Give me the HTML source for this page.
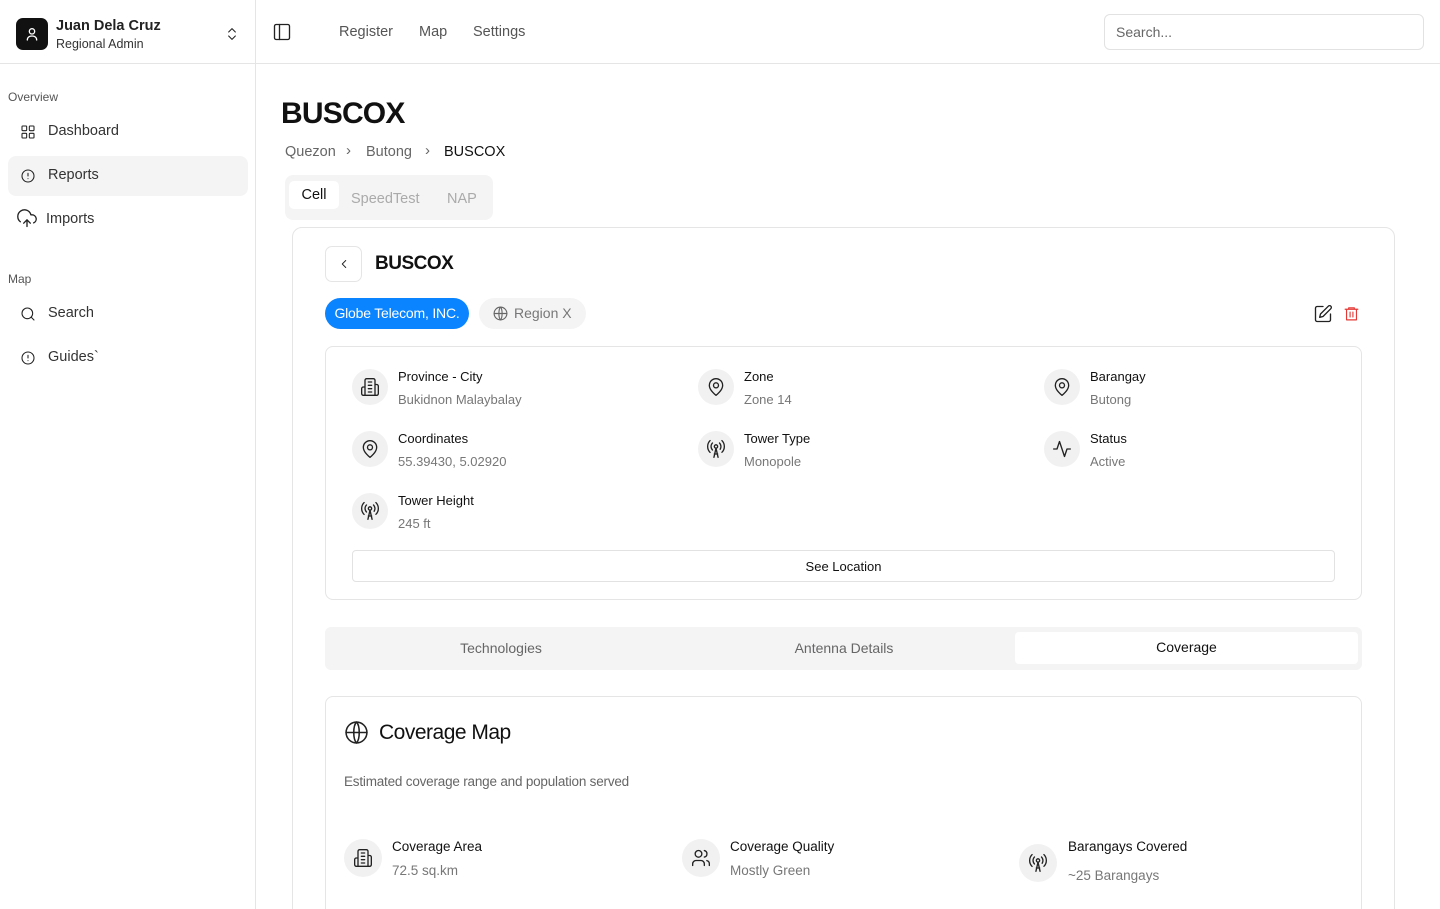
<!DOCTYPE html>
<html style="width:1440px;height:909px;overflow:hidden"><head><meta charset="utf-8"><style>
*{box-sizing:border-box;margin:0;padding:0}
body{width:1440px;height:909px;overflow:hidden;background:#fff;font-family:"Liberation Sans",sans-serif;color:#111;position:relative}
#w{position:absolute;left:0;top:0;width:1440px;height:909px;overflow:hidden}
.a{position:absolute}
svg{display:block}
.ic{fill:none;stroke:#222;stroke-width:1.6;stroke-linecap:round;stroke-linejoin:round}
.nav{font-size:14.5px;color:#333}
.circ{position:absolute;width:36px;height:36px;border-radius:50%;background:#f1f1f1;display:flex;align-items:center;justify-content:center}
.lbl{position:absolute;font-size:13px;color:#111}
.val{position:absolute;font-size:13px;color:#777}
</style></head><body><div id="w">
<div class="a" style="left:255px;top:0;width:1px;height:909px;background:#e5e5e5"></div>
<div class="a" style="left:0;top:63px;width:1440px;height:1px;background:#e5e5e5"></div>
<div class="a" style="left:16px;top:18px;width:32px;height:32px;border-radius:7px;background:#111;display:flex;align-items:center;justify-content:center">
<svg width="16" height="16" viewBox="0 0 24 24" fill="none" stroke="#fff" stroke-width="2" stroke-linecap="round"><circle cx="12" cy="8" r="4"/><path d="M5 21c0-4 3-6 7-6s7 2 7 6"/></svg></div>
<div class="a" style="left:56px;top:18px;font-size:14.5px;font-weight:bold;color:#222">Juan Dela Cruz</div>
<div class="a" style="left:56px;top:37px;font-size:12.5px;color:#333">Regional Admin</div>
<svg class="a ic" style="left:224px;top:26px" width="16" height="16" viewBox="0 0 24 24"><path d="M7 9l5-5 5 5M7 15l5 5 5-5"/></svg>
<div class="a" style="left:8px;top:90px;font-size:12px;color:#555">Overview</div>
<div class="a" style="left:8px;top:156px;width:240px;height:40px;border-radius:8px;background:#f4f4f5"></div>
<svg class="a ic" style="left:20px;top:124px" width="16" height="16" viewBox="0 0 24 24"><rect x="3" y="3" width="7" height="7" rx="1"/><rect x="14" y="3" width="7" height="7" rx="1"/><rect x="3" y="14" width="7" height="7" rx="1"/><rect x="14" y="14" width="7" height="7" rx="1"/></svg>
<div class="a nav" style="left:48px;top:123px">Dashboard</div>
<svg class="a ic" style="left:20px;top:168px" width="16" height="16" viewBox="0 0 24 24"><circle cx="12" cy="12" r="9"/><path d="M12 8v4M12 16h.01"/></svg>
<div class="a nav" style="left:48px;top:167px">Reports</div>
<svg class="a ic" style="left:16px;top:209px" width="22" height="20" viewBox="0 0 24 24"><path d="M12 13v8M8 17l4-4 4 4M20 16.6A5 5 0 0 0 18 7h-1.3A8 8 0 1 0 4 15.3"/></svg>
<div class="a nav" style="left:46px;top:211px">Imports</div>
<div class="a" style="left:8px;top:272px;font-size:12px;color:#555">Map</div>
<svg class="a ic" style="left:20px;top:306px" width="16" height="16" viewBox="0 0 24 24"><circle cx="11" cy="11" r="8"/><path d="M21 21l-4.3-4.3"/></svg>
<div class="a nav" style="left:48px;top:305px">Search</div>
<svg class="a ic" style="left:20px;top:350px" width="16" height="16" viewBox="0 0 24 24"><circle cx="12" cy="12" r="9"/><path d="M12 8v4M12 16h.01"/></svg>
<div class="a nav" style="left:48px;top:349px">Guides`</div>
<svg class="a ic" style="left:272px;top:22px" width="20" height="20" viewBox="0 0 24 24"><rect x="3" y="3" width="18" height="18" rx="2"/><path d="M9 3v18"/></svg>
<div class="a" style="left:339px;top:24px;font-size:14.5px;color:#555">Register</div>
<div class="a" style="left:419px;top:24px;font-size:14.5px;color:#555">Map</div>
<div class="a" style="left:473px;top:24px;font-size:14.5px;color:#555">Settings</div>
<div class="a" style="left:1104px;top:14px;width:320px;height:36px;border:1px solid #e2e2e2;border-radius:6px;font-size:14px;color:#666;padding:9px 11px">Search...</div>
<div class="a" style="left:281px;top:97px;font-size:30px;font-weight:bold;letter-spacing:-0.8px">BUSCOX</div>
<div class="a" style="left:285px;top:144px;font-size:14.5px;color:#666">Quezon</div>
<div class="a" style="left:346px;top:142px;font-size:15px;color:#666">›</div>
<div class="a" style="left:366px;top:144px;font-size:14.5px;color:#666">Butong</div>
<div class="a" style="left:425px;top:142px;font-size:15px;color:#666">›</div>
<div class="a" style="left:444px;top:144px;font-size:14.5px;color:#111">BUSCOX</div>
<div class="a" style="left:285px;top:175px;width:208px;height:45px;background:#f4f4f5;border-radius:8px"></div>
<div class="a" style="left:289px;top:181px;width:50px;height:28px;background:#fff;border-radius:5px;font-size:14.5px;text-align:center;line-height:29px">Cell</div>
<div class="a" style="left:351px;top:191px;font-size:14.5px;color:#aaa">SpeedTest</div>
<div class="a" style="left:447px;top:191px;font-size:14.5px;color:#aaa">NAP</div>
<div class="a" style="left:292px;top:227px;width:1103px;height:720px;border:1px solid #e5e5e5;border-radius:10px"></div>
<div class="a" style="left:325px;top:246px;width:37px;height:36px;border:1px solid #e5e5e5;border-radius:7px;display:flex;align-items:center;justify-content:center"><svg class="ic" width="14" height="14" viewBox="0 0 24 24"><path d="M15 6l-6 6 6 6"/></svg></div>
<div class="a" style="left:375px;top:253px;font-size:19px;font-weight:bold;letter-spacing:-0.5px">BUSCOX</div>
<div class="a" style="left:325px;top:298px;width:144px;height:31px;border-radius:16px;background:#0a84ff;color:#fff;font-size:14px;text-align:center;line-height:31px;letter-spacing:-0.2px">Globe Telecom, INC.</div>
<div class="a" style="left:479px;top:298px;width:107px;height:31px;border-radius:16px;background:#f4f4f5;color:#777;font-size:14px;line-height:31px;padding-left:35px">Region X</div>
<svg class="a ic" style="left:492px;top:305px;stroke:#666" width="17" height="17" viewBox="0 0 24 24"><circle cx="12" cy="12" r="9"/><path d="M3 12h18M12 3c3 3 3 15 0 18M12 3c-3 3-3 15 0 18"/></svg>
<svg class="a ic" style="left:1313px;top:304px" width="20" height="20" viewBox="0 0 24 24"><path d="M12 3H5a2 2 0 0 0-2 2v14a2 2 0 0 0 2 2h14a2 2 0 0 0 2-2v-7"/><path d="M18.4 2.6a2.1 2.1 0 0 1 3 3L12 15l-4 1 1-4z"/></svg>
<svg class="a ic" style="left:1343px;top:305px;stroke:#e53935" width="17" height="17" viewBox="0 0 24 24"><path d="M3 6h18M8 6V4h8v2M5 6h14v15H5zM10 10v7M14 10v7"/></svg>
<div class="a" style="left:325px;top:346px;width:1037px;height:254px;border:1px solid #e5e5e5;border-radius:8px"></div>
<div class="circ" style="left:352px;top:369px"><svg class="ic" width="20" height="20" viewBox="0 0 24 24"><path d="M6 22V4a2 2 0 0 1 2-2h8a2 2 0 0 1 2 2v18zM6 12H4a2 2 0 0 0-2 2v6a2 2 0 0 0 2 2h2M18 9h2a2 2 0 0 1 2 2v9a2 2 0 0 1-2 2h-2M10 6h4M10 10h4M10 14h4M10 18h4"/></svg></div>
<div class="lbl" style="left:398px;top:369px">Province - City</div><div class="val" style="left:398px;top:392px">Bukidnon Malaybalay</div>
<div class="circ" style="left:698px;top:369px"><svg class="ic" width="20" height="20" viewBox="0 0 24 24"><path d="M20 10c0 6-8 12-8 12s-8-6-8-12a8 8 0 0 1 16 0z"/><circle cx="12" cy="10" r="3"/></svg></div>
<div class="lbl" style="left:744px;top:369px">Zone</div><div class="val" style="left:744px;top:392px">Zone 14</div>
<div class="circ" style="left:1044px;top:369px"><svg class="ic" width="20" height="20" viewBox="0 0 24 24"><path d="M20 10c0 6-8 12-8 12s-8-6-8-12a8 8 0 0 1 16 0z"/><circle cx="12" cy="10" r="3"/></svg></div>
<div class="lbl" style="left:1090px;top:369px">Barangay</div><div class="val" style="left:1090px;top:392px">Butong</div>
<div class="circ" style="left:352px;top:431px"><svg class="ic" width="20" height="20" viewBox="0 0 24 24"><path d="M20 10c0 6-8 12-8 12s-8-6-8-12a8 8 0 0 1 16 0z"/><circle cx="12" cy="10" r="3"/></svg></div>
<div class="lbl" style="left:398px;top:431px">Coordinates</div><div class="val" style="left:398px;top:454px">55.39430, 5.02920</div>
<div class="circ" style="left:698px;top:431px"><svg class="ic" width="20" height="20" viewBox="0 0 24 24"><path d="M4.9 16.1C1 12.2 1 5.8 4.9 1.9M7.8 4.7a6.1 6.1 0 0 0 0 8.5M16.2 4.8c2 2 2.3 5.1.8 7.5M19.1 1.9a10 10 0 0 1 0 14.1"/><circle cx="12" cy="9" r="2"/><path d="M9.5 22L12 11l2.5 11M10 18h4"/></svg></div>
<div class="lbl" style="left:744px;top:431px">Tower Type</div><div class="val" style="left:744px;top:454px">Monopole</div>
<div class="circ" style="left:1044px;top:431px"><svg class="ic" width="20" height="20" viewBox="0 0 24 24"><path d="M22 12h-4l-3 9L9 3l-3 9H2"/></svg></div>
<div class="lbl" style="left:1090px;top:431px">Status</div><div class="val" style="left:1090px;top:454px">Active</div>
<div class="circ" style="left:352px;top:493px"><svg class="ic" width="20" height="20" viewBox="0 0 24 24"><path d="M4.9 16.1C1 12.2 1 5.8 4.9 1.9M7.8 4.7a6.1 6.1 0 0 0 0 8.5M16.2 4.8c2 2 2.3 5.1.8 7.5M19.1 1.9a10 10 0 0 1 0 14.1"/><circle cx="12" cy="9" r="2"/><path d="M9.5 22L12 11l2.5 11M10 18h4"/></svg></div>
<div class="lbl" style="left:398px;top:493px">Tower Height</div><div class="val" style="left:398px;top:516px">245 ft</div>
<div class="a" style="left:352px;top:550px;width:983px;height:32px;border:1px solid #e2e2e2;border-radius:4px;font-size:13px;text-align:center;line-height:31px">See Location</div>
<div class="a" style="left:325px;top:627px;width:1037px;height:43px;background:#f4f4f5;border-radius:6px"></div>
<div class="a" style="left:325px;top:640px;width:352px;text-align:center;font-size:14px;color:#666">Technologies</div>
<div class="a" style="left:668px;top:640px;width:352px;text-align:center;font-size:14px;color:#666">Antenna Details</div>
<div class="a" style="left:1015px;top:632px;width:343px;height:32px;background:#fff;border-radius:4px;text-align:center;line-height:31px;font-size:14px">Coverage</div>
<div class="a" style="left:325px;top:696px;width:1037px;height:260px;border:1px solid #e5e5e5;border-radius:8px"></div>
<svg class="a ic" style="left:344px;top:720px;stroke-width:1.5" width="25" height="25" viewBox="0 0 24 24"><circle cx="12" cy="12" r="10"/><path d="M2 12h20M12 2c3.5 3.5 3.5 16.5 0 20M12 2c-3.5 3.5-3.5 16.5 0 20"/></svg>
<div class="a" style="left:379px;top:721px;font-size:21px;color:#111;letter-spacing:-0.5px">Coverage Map</div>
<div class="a" style="left:344px;top:774px;font-size:13.5px;color:#666;letter-spacing:-0.2px">Estimated coverage range and population served</div>
<div class="circ" style="left:344px;top:839px;width:38px;height:38px"><svg class="ic" width="20" height="20" viewBox="0 0 24 24"><path d="M6 22V4a2 2 0 0 1 2-2h8a2 2 0 0 1 2 2v18zM6 12H4a2 2 0 0 0-2 2v6a2 2 0 0 0 2 2h2M18 9h2a2 2 0 0 1 2 2v9a2 2 0 0 1-2 2h-2M10 6h4M10 10h4M10 14h4M10 18h4"/></svg></div>
<div class="lbl" style="left:392px;top:839px;font-size:13.5px">Coverage Area</div><div class="val" style="left:392px;top:863px;font-size:13.5px">72.5 sq.km</div>
<div class="circ" style="left:682px;top:839px;width:38px;height:38px"><svg class="ic" width="20" height="20" viewBox="0 0 24 24"><path d="M16 21v-2a4 4 0 0 0-4-4H6a4 4 0 0 0-4 4v2"/><circle cx="9" cy="7" r="4"/><path d="M22 21v-2a4 4 0 0 0-3-3.9M16 3.1a4 4 0 0 1 0 7.8"/></svg></div>
<div class="lbl" style="left:730px;top:839px;font-size:13.5px">Coverage Quality</div><div class="val" style="left:730px;top:863px;font-size:13.5px">Mostly Green</div>
<div class="circ" style="left:1019px;top:844px;width:38px;height:38px"><svg class="ic" width="20" height="20" viewBox="0 0 24 24"><path d="M4.9 16.1C1 12.2 1 5.8 4.9 1.9M7.8 4.7a6.1 6.1 0 0 0 0 8.5M16.2 4.8c2 2 2.3 5.1.8 7.5M19.1 1.9a10 10 0 0 1 0 14.1"/><circle cx="12" cy="9" r="2"/><path d="M9.5 22L12 11l2.5 11M10 18h4"/></svg></div>
<div class="lbl" style="left:1068px;top:839px;font-size:13.5px">Barangays Covered</div><div class="val" style="left:1068px;top:868px;font-size:13.5px">~25 Barangays</div>
</div></body></html>
